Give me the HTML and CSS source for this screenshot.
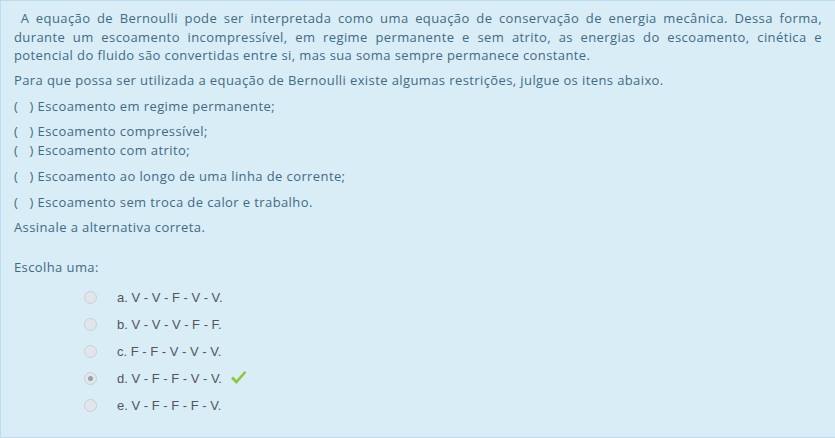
FILE: index.html
```html
<!DOCTYPE html>
<html lang="pt">
<head>
<meta charset="utf-8">
<link rel="stylesheet" href="styles.css">
</head>
<body>
<div class="qtext-box">
  <div class="qtext">
    <p class="intro">&nbsp;A equação de Bernoulli pode ser interpretada como uma equação de conservação de energia mecânica. Dessa forma, durante um escoamento incompressível, em regime permanente e sem atrito, as energias do escoamento, cinética e potencial do fluido são convertidas entre si, mas sua soma sempre permanece constante.</p>
    <p>Para que possa ser utilizada a equação de Bernoulli existe algumas restrições, julgue os itens abaixo.</p>
    <p>(&nbsp;&nbsp; ) Escoamento em regime permanente;</p>
    <p>(&nbsp;&nbsp; ) Escoamento compressível;<br>(&nbsp;&nbsp; ) Escoamento com atrito;</p>
    <p>(&nbsp;&nbsp; ) Escoamento ao longo de uma linha de corrente;</p>
    <p>(&nbsp;&nbsp; ) Escoamento sem troca de calor e trabalho.</p>
    <p>Assinale a alternativa correta.</p>
  </div>
  <div class="ablock">
    <div class="prompt">Escolha uma:</div>
    <div class="answer">
      <div class="opt"><span class="radio"></span><span class="label">a. V - V - F - V - V.</span></div>
      <div class="opt"><span class="radio"></span><span class="label">b. V - V - V - F - F.</span></div>
      <div class="opt"><span class="radio"></span><span class="label">c. F - F - V - V - V.</span></div>
      <div class="opt"><span class="radio checked"></span><span class="label">d. V - F - F - V - V.</span>
        <svg class="tick" width="17" height="15" viewBox="0 0 17 15"><path d="M1 8.5 L3.2 6.6 L6.4 10 L14.6 1 L16.4 2.6 L6.4 14 Z" fill="#8cc63e"/></svg>
      </div>
      <div class="opt"><span class="radio"></span><span class="label">e. V - F - F - F - V.</span></div>
    </div>
  </div>
</div>
</body>
</html>
```
FILE: styles.css
```css
html, body {
  margin: 0;
  padding: 0;
  background: #ffffff;
}
.qtext-box {
  box-sizing: border-box;
  width: 835px;
  height: 438px;
  background: #d9edf7;
  border: 1px solid #b9def2;
  border-right: none;
  padding: 8px 13px 0 13px;
  color: #3f6b85;
  font-family: "Open Sans", "DejaVu Sans", sans-serif;
  font-size: 13px;
  letter-spacing: 0.4px;
}
.qtext p {
  margin: 0 0 6.6px 0;
  line-height: 19px;
}
.qtext p.intro {
  text-align: justify;
  line-height: 18.6px;
  margin-bottom: 6.4px;
}
.ablock {
  margin-top: 21px;
}
.prompt {
  line-height: 19px;
}
.answer {
  margin-top: 7px;
  padding-left: 69px;
  display: flex;
  flex-direction: column;
}
.opt {
  display: flex;
  align-items: center;
  height: 27px;
  font-family: "Liberation Sans", Arial, sans-serif;
  font-size: 13px;
  letter-spacing: 0;
  color: #555555;
}
.radio {
  box-sizing: border-box;
  width: 13px;
  height: 13px;
  border-radius: 50%;
  border: 1px solid #c9cfd6;
  background: #e2e6ea;
  margin-right: 20px;
  margin-left: 1px;
  position: relative;
}
.radio.checked::after {
  content: "";
  position: absolute;
  left: 3px;
  top: 3px;
  width: 5px;
  height: 5px;
  border-radius: 50%;
  background: #9aa0a6;
}
.tick {
  margin-left: 8px;
  margin-top: -2px;
}
```
